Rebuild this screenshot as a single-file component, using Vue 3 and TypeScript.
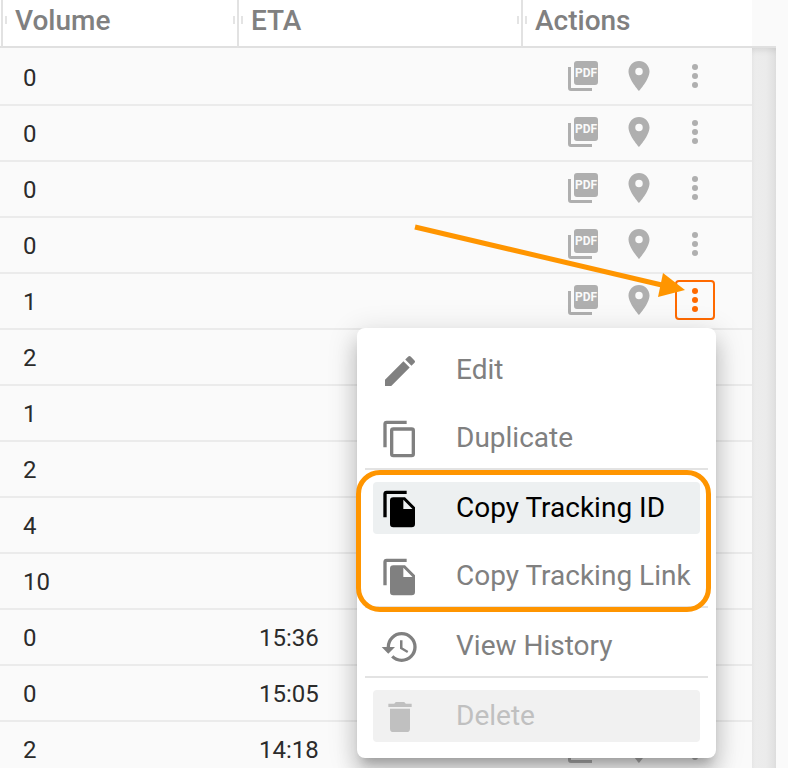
<script setup lang="ts">
import { ref } from 'vue'

interface Shipment {
  id: number
  volume: number
  eta: string
}

interface MenuItem {
  label: string
  icon: string
  state?: 'active' | 'disabled'
}

const shipments: Shipment[] = [
  { id: 1, volume: 0, eta: '' },
  { id: 2, volume: 0, eta: '' },
  { id: 3, volume: 0, eta: '' },
  { id: 4, volume: 0, eta: '' },
  { id: 5, volume: 1, eta: '' },
  { id: 6, volume: 2, eta: '' },
  { id: 7, volume: 1, eta: '' },
  { id: 8, volume: 2, eta: '' },
  { id: 9, volume: 4, eta: '' },
  { id: 10, volume: 10, eta: '' },
  { id: 11, volume: 0, eta: '15:36' },
  { id: 12, volume: 0, eta: '15:05' },
  { id: 13, volume: 2, eta: '14:18' },
]

const icons = {
  edit: 'M3 17.25V21h3.75L17.81 9.94l-3.75-3.75L3 17.25zM20.71 7.04a1 1 0 0 0 0-1.41l-2.34-2.34a1 1 0 0 0-1.41 0l-1.83 1.83 3.75 3.75 1.83-1.83z',
  duplicate: 'M19 21H8V7h11m0-2H8a2 2 0 0 0-2 2v14a2 2 0 0 0 2 2h11a2 2 0 0 0 2-2V7a2 2 0 0 0-2-2m-3-4H4a2 2 0 0 0-2 2v14h2V3h12V1z',
  copyFile: 'M16 1H4a2 2 0 0 0-2 2v14h2V3h12V1zM15 5H8a2 2 0 0 0-2 2v14a2 2 0 0 0 2 2h11a2 2 0 0 0 2-2V11l-6-6zm-1 7V6.5l5.5 5.5H14z',
  history: 'M13.5 8H12v5l4.28 2.54.72-1.21-3.5-2.08V8M13 3a9 9 0 0 0-9 9H1l3.96 4.03L9 12H6a7 7 0 0 1 7-7 7 7 0 0 1 7 7 7 7 0 0 1-7 7c-1.93 0-3.68-.79-4.94-2.06l-1.42 1.42C8.27 20 10.5 21 13 21a9 9 0 0 0 9-9 9 9 0 0 0-9-9',
  trash: 'M6 19a2 2 0 0 0 2 2h8a2 2 0 0 0 2-2V7H6v12zM19 4h-3.5l-1-1h-5l-1 1H5v2h14V4z',
}

const menuGroups: MenuItem[][] = [
  [
    { label: 'Edit', icon: icons.edit },
    { label: 'Duplicate', icon: icons.duplicate },
  ],
  [
    { label: 'Copy Tracking ID', icon: icons.copyFile, state: 'active' },
    { label: 'Copy Tracking Link', icon: icons.copyFile },
  ],
  [{ label: 'View History', icon: icons.history }],
  [{ label: 'Delete', icon: icons.trash, state: 'disabled' }],
]

const openRow = ref<number | null>(5)

function toggleMenu(id: number) {
  openRow.value = openRow.value === id ? null : id
}
</script>

<template>
  <main class="page">
    <div class="grid-area">
      <table class="grid">
        <colgroup>
          <col class="col-edge" />
          <col class="col-volume" />
          <col />
          <col class="col-actions" />
        </colgroup>
        <thead>
          <tr>
            <td class="edge"></td>
            <th scope="col"><span class="head">Volume</span></th>
            <th scope="col"><span class="head">ETA</span></th>
            <th scope="col"><span class="head last">Actions</span></th>
          </tr>
        </thead>
        <tbody>
          <tr v-for="row in shipments" :key="row.id">
            <td class="edge"></td>
            <td>{{ row.volume }}</td>
            <td>{{ row.eta }}</td>
            <td class="actions-cell">
              <div class="actions">
                <button type="button" class="icon-button" aria-label="Open document">
                  <svg viewBox="0 0 36 36" aria-hidden="true">
                    <path d="M30 3H12a3 3 0 0 0-3 3v18a3 3 0 0 0 3 3h18a3 3 0 0 0 3-3V6a3 3 0 0 0-3-3zM6 9H3v21a3 3 0 0 0 3 3h21v-3H6z" />
                    <text class="pdf" x="21" y="19" text-anchor="middle">PDF</text>
                  </svg>
                </button>
                <button type="button" class="icon-button" aria-label="Show location">
                  <svg viewBox="0 0 24 24" aria-hidden="true">
                    <path d="M12 2C8.13 2 5 5.13 5 9c0 5.25 7 13 7 13s7-7.75 7-13c0-3.87-3.13-7-7-7zm0 9.5a2.5 2.5 0 0 1 0-5 2.5 2.5 0 0 1 0 5z" />
                  </svg>
                </button>
                <button
                  type="button"
                  class="icon-button"
                  :class="{ open: openRow === row.id }"
                  aria-label="More actions"
                  :aria-expanded="openRow === row.id"
                  @click="toggleMenu(row.id)"
                >
                  <svg viewBox="0 0 24 24" aria-hidden="true">
                    <circle cx="12" cy="6" r="2" />
                    <circle cx="12" cy="12" r="2" />
                    <circle cx="12" cy="18" r="2" />
                  </svg>
                </button>
              </div>
            </td>
          </tr>
        </tbody>
      </table>
    </div>
    <div class="gutter">
      <div class="gutter-head"></div>
      <div class="gutter-track"></div>
    </div>

    <div v-if="openRow !== null" class="menu" role="menu">
      <div v-for="(group, index) in menuGroups" :key="index" class="menu-group">
        <button
          v-for="item in group"
          :key="item.label"
          type="button"
          role="menuitem"
          class="menu-item"
          :class="item.state"
          :disabled="item.state === 'disabled'"
        >
          <svg viewBox="0 0 24 24" aria-hidden="true"><path :d="item.icon" /></svg>
          <span>{{ item.label }}</span>
        </button>
      </div>
      <div class="highlight"></div>
    </div>

    <svg class="arrow" viewBox="0 0 280 80" aria-hidden="true">
      <path d="M5 17 256 76" />
      <polygon points="275,80 253,63 248,87" />
    </svg>
  </main>
</template>

<style>
body {
  margin: 0;
  background: #fafafa;
}
</style>

<style scoped>
.page {
  position: relative;
  display: flex;
  height: 100vh;
  box-sizing: border-box;
  padding-right: 12px;
  overflow: hidden;
  background: #fafafa;
  color: #2b2b2b;
  font-family: Roboto, "Liberation Sans", sans-serif;
}

button {
  margin: 0;
  border: 0;
  background: none;
  font: inherit;
  color: inherit;
  cursor: pointer;
}

svg {
  display: block;
  flex: none;
  fill: currentColor;
}

.grid-area {
  flex: 1;
  min-width: 0;
}

.grid {
  width: 100%;
  table-layout: fixed;
  border-collapse: separate;
  border-spacing: 0;
}

.col-edge {
  width: 1px;
}

.col-volume {
  width: 236px;
}

.col-actions {
  width: 231px;
}

thead th,
thead td {
  height: 46px;
  padding: 0;
  border-bottom: 2px solid #e0e0e0;
  background: #fff;
  text-align: left;
}

thead th {
  border-left: 2px solid #e2e2e2;
}

.head {
  position: relative;
  display: block;
  padding: 0 12px 4px;
  color: #808080;
  font-size: 28px;
  font-weight: 500;
  line-height: 42px;
}

.head::before,
.head:not(.last)::after {
  content: "";
  position: absolute;
  top: 16px;
  width: 2px;
  height: 8px;
  background: #e4e4e4;
}

.head::before {
  left: 2px;
}

.head:not(.last)::after {
  right: 2px;
}

tbody td {
  height: 52px;
  padding: 2px 0 0 22px;
  border-bottom: 2px solid #ebebeb;
  font-size: 24px;
  line-height: 28px;
}

tbody tr:first-child td {
  padding-top: 4px;
}

tbody td.edge {
  padding-left: 0;
}

tbody td.actions-cell {
  padding-left: 42px;
}

.actions {
  display: flex;
  gap: 16px;
  padding-bottom: 4px;
}

.icon-button {
  display: flex;
  align-items: center;
  justify-content: center;
  box-sizing: border-box;
  width: 40px;
  height: 40px;
  padding: 0;
  border: 2px solid transparent;
  border-radius: 4px;
  color: #afafaf;
}

.icon-button svg {
  width: 36px;
  height: 36px;
}

.icon-button.open {
  border-color: #ff6a00;
  color: #ff6a00;
}

.pdf {
  fill: #fafafa;
  font-size: 12px;
  font-weight: 700;
}

.gutter {
  display: flex;
  flex-direction: column;
  width: 24px;
}

.gutter-head {
  height: 46px;
  border-bottom: 2px solid #e0e0e0;
}

.gutter-track {
  flex: 1;
  background: linear-gradient(to right, #e8e8e8, #ececec 4px, #ebebeb 14px, #dfdfdf);
  box-shadow: inset 0 6px 6px -4px rgba(0, 0, 0, 0.1);
}

.menu {
  position: absolute;
  top: 328px;
  right: 72px;
  box-sizing: border-box;
  width: 359px;
  padding: 16px 8px;
  border-radius: 8px;
  background: #fff;
  box-shadow:
    0 10px 10px -6px rgba(0, 0, 0, 0.2),
    0 16px 20px 2px rgba(0, 0, 0, 0.14),
    0 6px 28px 4px rgba(0, 0, 0, 0.12);
}

.menu-group {
  display: flex;
  flex-direction: column;
  gap: 16px;
  padding: 0 8px;
}

.menu-group + .menu-group {
  margin-top: 4px;
  padding-top: 12px;
  border-top: 2px solid #e3e3e3;
}

.menu-item {
  display: flex;
  align-items: center;
  gap: 36px;
  height: 52px;
  padding: 0 7px;
  border-radius: 4px;
  color: #808080;
  font-size: 28px;
  line-height: 32px;
  white-space: nowrap;
}

.menu-item svg {
  width: 40px;
  height: 40px;
  margin-top: 2px;
}

.menu-item.active {
  background: #edf0f1;
  color: #000;
}

.menu-item.disabled {
  background: #f1f1f1;
  color: #c0c0c0;
  cursor: default;
}

.highlight {
  position: absolute;
  top: 142px;
  right: 5px;
  left: -1px;
  box-sizing: border-box;
  height: 142px;
  border: 5px solid #ff9500;
  border-radius: 24px;
  pointer-events: none;
}

.arrow {
  position: absolute;
  top: 210px;
  right: 98px;
  width: 280px;
  height: 80px;
  overflow: visible;
  pointer-events: none;
}

.arrow path {
  fill: none;
  stroke: #ff9500;
  stroke-width: 5;
}

.arrow polygon {
  fill: #ff9500;
}
</style>
